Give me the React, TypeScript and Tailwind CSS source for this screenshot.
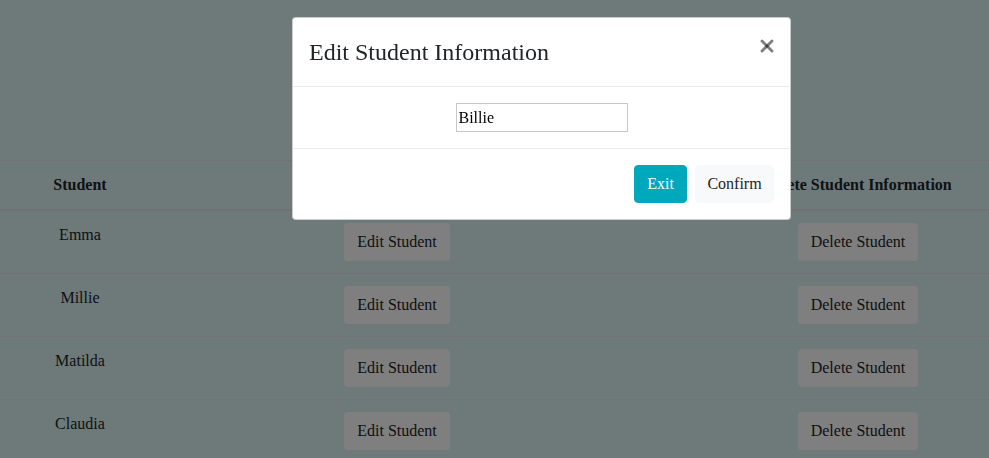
import { X } from "lucide-react";

const students = ["Emma", "Millie", "Matilda", "Claudia"];

export default function App() {
  return (
    <div
      className="relative min-h-[458px] bg-[#dcf4f4] text-[#212529] overflow-hidden"
      style={{ fontFamily: '"Liberation Serif", "Times New Roman", serif' }}
    >
      {/* Student table */}
      <div className="pt-[160px] text-base leading-6">
        <div className="grid grid-cols-[160px_474px_1fr] border-t border-b border-[#dee2e6]">
          <div className="py-3 text-center font-bold">Student</div>
          <div className="py-3 text-center font-bold">Edit Student Information</div>
          <div className="py-3 pl-[93px] text-center font-bold">Delete Student Information</div>
        </div>
        {students.map((name) => (
          <div key={name} className="grid grid-cols-[160px_474px_1fr] border-t border-[#dee2e6]">
            <div className="py-3 text-center">{name}</div>
            <div className="py-3 flex justify-center">
              <button className="h-[38px] px-3 rounded border border-transparent bg-[#fefefe]">Edit Student</button>
            </div>
            <div className="py-3 pl-[93px] flex justify-center">
              <button className="h-[38px] px-3 rounded border border-transparent bg-[#fefefe]">Delete Student</button>
            </div>
          </div>
        ))}
      </div>

      {/* Modal backdrop + dialog */}
      <div className="fixed inset-0 bg-black/50">
        <div className="ml-[292px] mt-[17px] w-[499px] bg-white rounded border border-black/20 text-[#212529]">
          <div className="flex items-start justify-between px-4 py-4 border-b border-[#e9ecef]">
            <h5 className="text-2xl leading-9 font-normal">Edit Student Information</h5>
            <button className="text-black/50 mt-[2px] -mr-[3px]">
              <X size={20} strokeWidth={3.4} />
            </button>
          </div>
          <div className="p-4 flex justify-center border-b border-[#e9ecef]">
            <input
              defaultValue="Billie"
              className="w-[172px] h-[29px] px-[2px] border border-[#c8c8c8] text-base text-black outline-none"
              style={{ fontFamily: '"Liberation Serif", "Times New Roman", serif' }}
            />
          </div>
          <div className="flex justify-end gap-2 p-4">
            <button className="h-[38px] w-[53px] rounded border border-[#00a8bc] bg-[#00a8bc] text-white">Exit</button>
            <button className="h-[38px] w-[79px] rounded border border-[#f8f9fa] bg-[#f8f9fa] text-[#212529]">Confirm</button>
          </div>
        </div>
      </div>
    </div>
  );
}
